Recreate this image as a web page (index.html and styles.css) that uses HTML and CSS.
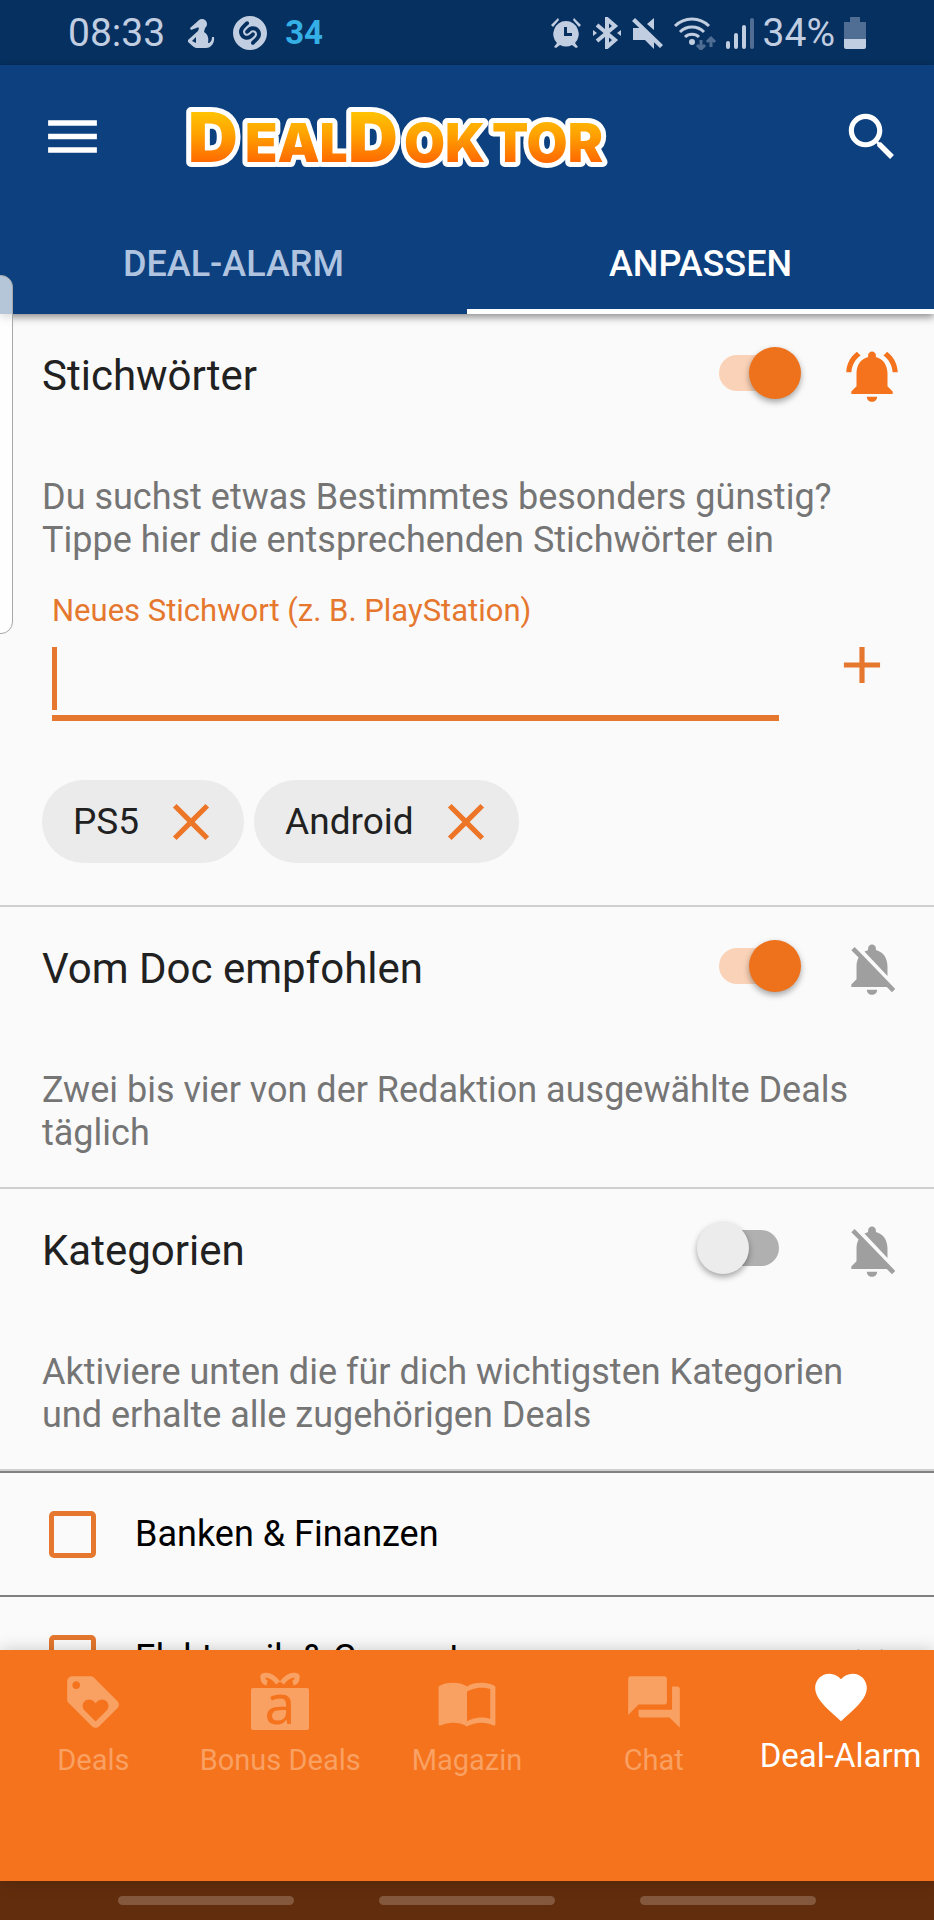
FILE: index.html
```html
<!DOCTYPE html>
<html lang="de">
<head>
<meta charset="utf-8">
<meta name="viewport" content="width=device-width, initial-scale=1">
<title>DealDoktor – Deal-Alarm anpassen</title>
<link rel="stylesheet" href="styles.css">
</head>
<body>
<svg class="defs" aria-hidden="true">
  <symbol id="bell-off" viewBox="0 0 24 24"><path d="M20 18.69L7.84 6.14 5.27 3.49 4 4.76l2.8 2.8v.01c-.52.99-.8 2.16-.8 3.42v5l-2 2v1h13.73l2 2L21 19.72l-1-1.03zM12 22c1.11 0 2-.89 2-2h-4c0 1.11.89 2 2 2zm6-7.32V11c0-3.08-1.64-5.64-4.5-6.32V4c0-.83-.67-1.5-1.5-1.5s-1.5.67-1.5 1.5v.68c-.15.03-.29.08-.42.12-.1.03-.2.07-.3.11h-.01c-.01 0-.01 0-.02.01-.23.09-.46.2-.68.31 0 0-.01 0-.01.01L18 14.68z"/></symbol>
  <symbol id="close" viewBox="0 0 24 24"><path d="M19 6.41L17.59 5 12 10.59 6.41 5 5 6.41 10.59 12 5 17.59 6.41 19 12 13.41 17.59 19 19 17.59 13.41 12z"/></symbol>
</svg>
<div class="app">
  <div class="status">
    <div class="status-group">
      <span class="clock">08:33</span>
      <svg class="st-person" viewBox="0 0 28 30"><circle cx="15" cy="6" r="5"/><path d="M11 3L3 10l1 2 8-3zM12 10h6l-1 4c4 2 5 7 4 11h1c2-1 3-3 3-6h2c1 6-3 11-8 11H9c-3-1-5-4-8-6v-2l10-9zm-3 9l-4 4 4 2z" fill-rule="evenodd"/></svg>
      <svg class="st-shazam" viewBox="0 0 24 24"><path d="M12 0C5.373 0 0 5.373 0 12s5.373 12 12 12 12-5.373 12-12S18.627 0 12 0M9.872 16.736c-1.287 0-2.573-.426-3.561-1.281-1.214-1.049-1.934-2.479-2.029-4.024-.09-1.499.42-2.944 1.436-4.067C6.86 6.101 8.907 4.139 8.993 4.055c.555-.532 1.435-.511 1.966.045.53.557.512 1.439-.044 1.971-.021.02-2.061 1.976-3.137 3.164-.508.564-.764 1.283-.719 2.027.049.789.428 1.529 1.07 2.086.844.73 2.51.891 3.553-.043.619-.559 1.372-1.377 1.38-1.386.52-.567 1.4-.603 1.965-.081.565.52.603 1.402.083 1.969-.035.035-.852.924-1.572 1.572-1.005.902-2.336 1.357-3.666 1.357m8.41-.099c-1.143 1.262-3.189 3.225-3.276 3.309-.27.256-.615.385-.96.385-.368 0-.732-.145-1.006-.43-.531-.559-.512-1.439.044-1.971.021-.02 2.063-1.977 3.137-3.166.508-.563.764-1.283.719-2.027-.048-.789-.428-1.529-1.07-2.084-.844-.73-2.51-.893-3.552.044-.621.556-1.373 1.376-1.38 1.384-.521.566-1.399.604-1.966.084-.564-.521-.604-1.404-.082-1.971.034-.037.85-.926 1.571-1.573 1.979-1.778 5.221-1.813 7.227-.077 1.214 1.051 1.935 2.48 2.028 4.025.092 1.497-.419 2.945-1.434 4.068"/></svg>
      <span class="count">34</span>
    </div>
    <div class="status-group status-right">
      <svg class="st-icon" viewBox="0 0 32 32"><path d="M16 4a13 13 0 0 1 9 22l3 4-2 1-4-3a13 13 0 0 1-12 0l-4 3-2-1 3-4A13 13 0 0 1 16 4zm-2 6v9h8v-3h-5v-6zM1 8l7-7 1 2-6 7zM24 1l7 7-2 2-6-7z" fill-rule="evenodd"/></svg>
      <svg class="st-icon" viewBox="0 0 32 32"><path d="M6 8l18 15-8 7V2l8 7L6 24" class="line bt"/><path d="M2 13l4 3-4 3zM30 13l-4 3 4 3z"/></svg>
      <svg class="st-icon" viewBox="0 0 32 32"><path d="M1 11h7l14 14v7l-9-9H1zM22 1v12l-7-6zM3 1l28 27-3 3L0 4z"/></svg>
      <svg class="st-wifi" viewBox="0 0 44 34"><path d="M2 10a24 24 0 0 1 34 0M7 16a17 17 0 0 1 24 0M12 21a10 10 0 0 1 14 0" class="line"/><circle cx="19" cy="26" r="3"/><path d="M28 24v8m-4-3l4 4 4-4M38 31v-9m-4 4l4-4 4 4" class="line faint"/></svg>
      <svg class="st-signal" viewBox="0 0 28 32"><path d="M2 26v4M10 18v12M18 10v20" class="line bars"/><path d="M26 3v27" class="line bars faint"/></svg>
      <span class="clock">34%</span>
      <svg class="st-battery" viewBox="0 0 22 32"><path d="M6 0h10v5h6v17H0V5h6z" class="faint"/><path d="M0 22h22v8q0 2-2 2H2q-2 0-2-2z"/></svg>
    </div>
  </div>

  <header class="header">
    <div class="toolbar">
      <button class="icon-btn" aria-label="Menü"><svg class="menu-icon" viewBox="0 0 24 24"><path d="M3 18h18v-2H3v2zm0-5h18v-2H3v2zm0-7v2h18V6H3z"/></svg></button>
      <svg class="logo" viewBox="0 0 440 70" role="img" aria-label="DealDoktor">
        <defs><linearGradient id="gold" gradientUnits="userSpaceOnUse" x1="0" y1="10" x2="0" y2="60"><stop offset="0" stop-color="#ffc305"/><stop offset=".45" stop-color="#ffa200"/><stop offset="1" stop-color="#ff6a00"/></linearGradient></defs>
        <text y="60"><tspan x="2" class="big">D</tspan><tspan x="59">EAL</tspan><tspan x="162" class="big">D</tspan><tspan x="218">OK</tspan><tspan x="306">TOR</tspan></text>
      </svg>
      <button class="icon-btn" aria-label="Suche"><svg class="icon" viewBox="0 0 24 24"><path d="M15.5 14h-.79l-.28-.27C15.41 12.59 16 11.11 16 9.5 16 5.91 13.09 3 9.5 3S3 5.91 3 9.5 5.91 16 9.5 16c1.61 0 3.09-.59 4.23-1.57l.27.28v.79l5 4.99L20.49 19l-4.99-5zm-6 0C7.01 14 5 11.99 5 9.5S7.01 5 9.5 5 14 7.01 14 9.5 11.99 14 9.5 14z"/></svg></button>
    </div>
    <nav class="tabs">
      <a class="tab" href="#alarm">DEAL-ALARM</a>
      <a class="tab tab-active" href="#anpassen">ANPASSEN</a>
    </nav>
  </header>

  <main class="content">
    <section class="section">
      <div class="section-head">
        <h2 id="t1">Stichwörter</h2>
        <input class="switch" type="checkbox" checked aria-labelledby="t1">
        <button class="bell bell-on" aria-label="Benachrichtigung an"><svg class="icon" viewBox="0 0 24 24"><path d="M7.58 4.08L6.15 2.65C3.75 4.48 2.17 7.3 2.03 10.5h2c.15-2.65 1.51-4.97 3.55-6.42zm12.39 6.42h2c-.15-3.2-1.73-6.02-4.12-7.85l-1.42 1.43c2.02 1.45 3.39 3.77 3.54 6.42zM18 11c0-3.07-1.64-5.64-4.5-6.32V4c0-.83-.67-1.5-1.5-1.5s-1.5.67-1.5 1.5v.68C7.63 5.36 6 7.92 6 11v5l-2 2v1h16v-1l-2-2v-5zm-6 11c.14 0 .27-.01.4-.04.65-.14 1.18-.58 1.44-1.18.1-.24.15-.5.15-.78h-4c.01 1.1.9 2 2.01 2z"/></svg></button>
      </div>
      <p class="desc">Du suchst etwas Bestimmtes besonders günstig? Tippe hier die entsprechenden Stichwörter ein</p>
      <div class="entry">
        <div class="field">
          <label for="keyword">Neues Stichwort (z. B. PlayStation)</label>
          <input id="keyword" type="text">
        </div>
        <button class="add" aria-label="Hinzufügen"><svg class="icon" viewBox="0 0 24 24"><path d="M19 13h-6v6h-2v-6H5v-2h6V5h2v6h6v2z"/></svg></button>
      </div>
      <div class="chips">
        <span class="chip">PS5<button aria-label="PS5 entfernen"><svg class="icon"><use href="#close"/></svg></button></span>
        <span class="chip">Android<button aria-label="Android entfernen"><svg class="icon"><use href="#close"/></svg></button></span>
      </div>
    </section>

    <section class="section">
      <div class="section-head">
        <h2 id="t2">Vom Doc empfohlen</h2>
        <input class="switch" type="checkbox" checked aria-labelledby="t2">
        <button class="bell" aria-label="Benachrichtigung aus"><svg class="icon"><use href="#bell-off"/></svg></button>
      </div>
      <p class="desc">Zwei bis vier von der Redaktion ausgewählte Deals täglich</p>
    </section>

    <section class="section">
      <div class="section-head">
        <h2 id="t3">Kategorien</h2>
        <input class="switch" type="checkbox" aria-labelledby="t3">
        <button class="bell" aria-label="Benachrichtigung aus"><svg class="icon"><use href="#bell-off"/></svg></button>
      </div>
      <p class="desc">Aktiviere unten die für dich wichtigsten Kategorien und erhalte alle zugehörigen Deals</p>
    </section>

    <div class="category"><label><input type="checkbox">Banken &amp; Finanzen</label></div>
    <div class="category"><label><input type="checkbox">Elektronik &amp; Computer</label>
      <button class="expand" aria-label="Aufklappen"><svg class="icon" viewBox="0 0 24 24"><path d="M16.59 8.59L12 13.17 7.41 8.59 6 10l6 6 6-6z"/></svg></button>
    </div>
  </main>

  <nav class="bottom">
    <a href="#deals"><svg class="icon" viewBox="0 0 24 24"><path d="M21.41 11.58l-9-9C12.04 2.21 11.53 2 11 2H4c-1.1 0-2 .9-2 2v7c0 .55.22 1.05.59 1.42l9 9c.36.36.86.58 1.41.58s1.05-.22 1.41-.59l7-7c.37-.36.59-.86.59-1.41s-.23-1.06-.59-1.42zM5.5 7C4.67 7 4 6.33 4 5.5S4.67 4 5.5 4 7 4.67 7 5.5 6.33 7 5.5 7zm11.77 8.27L13 19.54l-4.27-4.27C8.28 14.81 8 14.19 8 13.5c0-1.38 1.12-2.5 2.5-2.5.69 0 1.32.28 1.77.74l.73.72.73-.73c.45-.45 1.08-.73 1.77-.73 1.38 0 2.5 1.12 2.5 2.5 0 .69-.28 1.32-.73 1.77z"/></svg><span>Deals</span></a>
    <a href="#bonus"><svg class="icon" viewBox="0 0 62 62"><rect x="2" y="17" width="58" height="42" rx="2"/><path d="M29 12C22 2 12 3 14 7q0 4 4 5M33 12C40 2 50 3 48 7q0 4-4 5" class="bow"/><text x="31" y="53" class="bonus-a">a</text></svg><span>Bonus Deals</span></a>
    <a href="#magazin"><svg class="icon" viewBox="0 0 24 24"><path d="M21 5c-1.110-.35-2.330-.5-3.500-.5-1.950 0-4.050.4-5.500 1.500-1.450-1.100-3.550-1.500-5.500-1.500S2.450 4.900 1 6v14.650c0 .25.25.5.5.5.1 0 .15-.050.25-.050C3.100 20.450 5.050 20 6.500 20c1.950 0 4.050.4 5.500 1.500 1.350-.85 3.800-1.500 5.500-1.500 1.650 0 3.350.3 4.750 1.050.1.050.15.050.25.050.25 0 .5-.25.5-.5V6c-.6-.45-1.250-.75-2-1zm0 13.500c-1.100-.35-2.300-.5-3.500-.5-1.700 0-4.150.65-5.500 1.500V8c1.350-.85 3.800-1.500 5.500-1.500 1.200 0 2.400.15 3.500.5v11.500z"/></svg><span>Magazin</span></a>
    <a href="#chat"><svg class="icon" viewBox="0 0 24 24"><path d="M22 22l-4-4H7c-.55 0-1-.45-1-1v-2h13V6h2c.55 0 1 .45 1 1v15zM17 3v9c0 .55-.45 1-1 1H6l-4 4V3c0-.55.45-1 1-1h13c.55 0 1 .45 1 1z"/></svg><span>Chat</span></a>
    <a href="#deal-alarm" class="active"><svg class="icon" viewBox="0 0 24 24"><path d="M12 21.350l-1.450-1.320C5.400 15.360 2 12.280 2 8.500 2 5.420 4.420 3 7.500 3c1.740 0 3.410.81 4.500 2.090C13.090 3.810 14.760 3 16.500 3 19.580 3 22 5.420 22 8.500c0 3.780-3.400 6.860-8.550 11.540L12 21.350z"/></svg><span>Deal-Alarm</span></a>
  </nav>
  <div class="system"><i></i><i></i><i></i></div>
  <div class="edge-handle"></div>
</div>
</body>
</html>
```
FILE: styles.css
```css
* { box-sizing: border-box; }
body { margin: 0; font-family: Roboto, "Noto Sans", sans-serif; font-size: 36px; background: #fafafa; }
button { border: 0; padding: 0; background: none; color: inherit; font: inherit; display: flex; }
a { color: inherit; text-decoration: none; }
svg { fill: currentColor; display: block; flex: none; }
.defs { position: absolute; width: 0; height: 0; }
.icon { width: 62px; height: 62px; overflow: visible; }

.app { position: relative; height: 100vh; display: flex; flex-direction: column; overflow: hidden; }

.status { height: 65px; flex: none; background: #06305f; color: #c1cde0; display: flex; align-items: center; justify-content: space-between; padding: 0 68px; }
.status-group { display: flex; align-items: center; gap: 18px; }
.status-right { gap: 9px; }
.clock { font-size: 39px; line-height: 46px; }
.count { font-size: 33px; font-weight: 700; color: #35b0e6; line-height: 46px; }
.st-person { width: 28px; height: 30px; margin-left: 4px; }
.st-shazam { width: 34px; height: 34px; }
.st-icon { width: 32px; height: 32px; }
.st-wifi { width: 44px; height: 34px; }
.st-signal { width: 28px; height: 32px; }
.st-battery { width: 22px; height: 32px; }
.line { fill: none; stroke: currentColor; stroke-width: 3; }
.bt, .bars { stroke-width: 4; }
.bars { stroke-linecap: round; }
.faint { opacity: .4; }

.header { flex: none; background: #0c407f; color: #fff; box-shadow: 0 3px 8px rgba(0,0,0,.45); position: relative; z-index: 1; }
.toolbar { height: 143px; display: flex; align-items: center; padding: 0 31px 0 40px; }
.menu-icon { width: 65px; height: 65px; }
.logo { width: 440px; height: 70px; margin: 0 auto 0 81px; overflow: visible; }
.logo text { font-family: Inter, sans-serif; font-weight: 900; font-size: 53px; fill: url(#gold); stroke: #fff; stroke-width: 10px; stroke-linejoin: round; paint-order: stroke; }
.logo .big { font-size: 69px; }
.tabs { display: flex; height: 106px; }
.tab { flex: 1; display: flex; align-items: center; justify-content: center; font-weight: 500; color: #b0c4e0; border-bottom: 5px solid transparent; padding-top: 10px; }
.tab-active { color: #fff; border-color: #fff; }

.content { flex: 1; min-height: 0; overflow: hidden; }
.section { padding: 0 31px 32px 42px; border-bottom: 2px solid #cfcfcf; }
.section-head { height: 118px; display: flex; align-items: center; }
.section-head h2 { flex: 1; margin: 0; padding-top: 4px; font-weight: 400; font-size: 42px; color: #212121; }
.switch { appearance: none; position: relative; width: 104px; height: 52px; margin: 0 40px 0 0; }
.switch::before { content: ""; position: absolute; inset: 8px 22px; border-radius: 18px; background: #b0b0b0; }
.switch::after { content: ""; position: absolute; left: 0; top: 0; width: 52px; height: 52px; border-radius: 50%; background: #ececec; box-shadow: 0 3px 6px rgba(0,0,0,.35); }
.switch:checked::before { background: #fad2b7; }
.switch:checked::after { left: 52px; background: #ee711c; }
.bell { color: #9f9f9f; padding-top: 6px; }
.bell-on { color: #f4731c; }
.desc { margin: 44px 0 0; line-height: 43px; color: #757575; }

.entry { display: flex; align-items: center; justify-content: space-between; margin-top: 31px; color: #e5772e; }
.field { flex: 1; margin: 0 52px 0 10px; display: flex; flex-direction: column; gap: 10px; }
.field label { font-size: 31px; line-height: 36px; }
.field input { width: 100%; height: 82px; border: 0; border-bottom: 6px solid #e5772e; padding: 0 8px; font: inherit; outline: 0; background: linear-gradient(#e5772e, #e5772e) no-repeat 0 8px / 5px 63px; }
.add { padding-top: 16px; margin-right: 10px; }
.chips { display: flex; gap: 10px; margin: 59px 0 10px; }
.chip { display: flex; align-items: center; gap: 21px; height: 83px; border-radius: 42px; background: #ebebeb; color: #212121; padding: 0 22px 0 31px; font-size: 37px; }
.chip button { color: #ec7527; }

.category { display: flex; align-items: center; justify-content: space-between; height: 124px; border-top: 2px solid #808080; padding: 0 33px 0 49px; color: #000; }
.category label { display: flex; align-items: center; gap: 39px; }
.category input { appearance: none; width: 47px; height: 47px; margin: 0; border: 5px solid #e5772e; border-radius: 5px; }
.expand { color: #757575; }

.bottom { flex: none; height: 231px; background: #f5731c; color: #f9a063; display: flex; box-shadow: 0 0 16px rgba(0,0,0,.2); position: relative; z-index: 1; }
.bottom a { flex: 1 1 0; min-width: 0; display: flex; flex-direction: column; align-items: center; padding-top: 21px; gap: 9px; font-size: 29px; line-height: 36px; white-space: nowrap; }
.bottom .active { color: #fff; padding-top: 16px; gap: 10px; font-size: 33px; }
.bow { fill: none; stroke: currentColor; stroke-width: 5; }
.bonus-a { font-family: "Noto Sans", sans-serif; font-size: 55px; font-weight: 400; text-anchor: middle; fill: #f5731c; }
.system { flex: none; height: 39px; background: #622d0d; display: flex; align-items: center; justify-content: center; gap: 85px; }
.system i { width: 176px; height: 9px; border-radius: 5px; background: #84583d; }

.edge-handle { position: absolute; left: -2px; top: 275px; width: 15px; height: 359px; border: 1px solid #a8a8a8; border-radius: 0 12px 12px 0; background: rgba(255,255,255,.7); z-index: 2; }
```
